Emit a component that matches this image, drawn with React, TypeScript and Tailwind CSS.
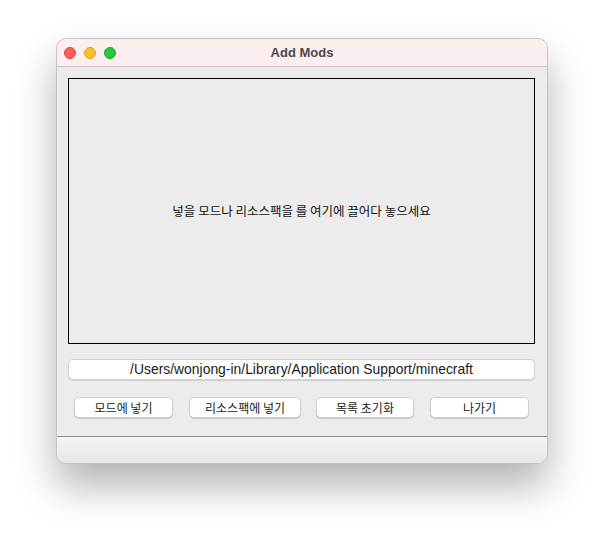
import React from 'react';

const font = { fontFamily: '"Noto Sans CJK KR", "Liberation Sans", sans-serif' };

const buttons = [
  { label: '모드에 넣기', w: 'w-[99px]' },
  { label: '리소스팩에 넣기', w: 'w-[112px]' },
  { label: '목록 초기화', w: 'w-[98px] ml-[-1px]' },
  { label: '나가기', w: 'w-[99px]' },
];

export default function App() {
  return (
    <div className="w-[603px] h-[537px] bg-white pt-[38px] pl-[56px]" style={font}>
      <div className="w-[492px] h-[426px] rounded-[10px] overflow-hidden border border-[#c4c4c4] bg-[#ececec] flex flex-col shadow-[0_22px_40px_rgba(0,0,0,0.3)]">
        <div className="h-[28px] bg-[#fbeeee] border-b border-[#c8c8c8] flex items-center relative shrink-0">
          <div className="flex gap-[8px] pl-[7px]">
            <span className="w-[12px] h-[12px] rounded-full bg-[#fe5f57] border border-[#e0443e]" />
            <span className="w-[12px] h-[12px] rounded-full bg-[#febc2e] border border-[#dea123]" />
            <span className="w-[12px] h-[12px] rounded-full bg-[#28c840] border border-[#1aab29]" />
          </div>
          <div className="absolute inset-0 flex items-center justify-center text-[13px] font-bold text-[#4a4a4a]" style={{ fontFamily: '"Liberation Sans", "Noto Sans CJK KR", sans-serif' }}>
            Add Mods
          </div>
        </div>
        <div className="pl-[11px] pr-[12px] pt-[11px] flex flex-col">
          <div className="h-[266px] border border-black flex items-center justify-center text-[12.5px] text-[#111]">
            넣을 모드나 리소스팩을 를 여기에 끌어다 놓으세요
          </div>
          <div className="mt-[15px] h-[21px] rounded-[5px] bg-white border border-[#d0d0d0] shadow-[0_1px_1px_rgba(0,0,0,0.12)] flex items-center justify-center text-[13.9px] text-[#1a1a1a]" style={{ fontFamily: '"Liberation Sans", "Noto Sans CJK KR", sans-serif' }}>
            /Users/wonjong-in/Library/Application Support/minecraft
          </div>
          <div className="mt-[17px] flex gap-[16px] pl-[6px]">
            {buttons.map((b) => (
              <div
                key={b.label}
                className={`${b.w} h-[21px] rounded-[5px] bg-white border border-[#d0d0d0] shadow-[0_1px_1px_rgba(0,0,0,0.15)] flex items-center justify-center text-[12px] text-[#222]`}
              >
                {b.label}
              </div>
            ))}
          </div>
        </div>
        <div className="mt-auto h-[27px] border-t border-[#8f8f8f] bg-gradient-to-b from-[#f5f5f5] to-[#e6e6e6]" />
      </div>
    </div>
  );
}
